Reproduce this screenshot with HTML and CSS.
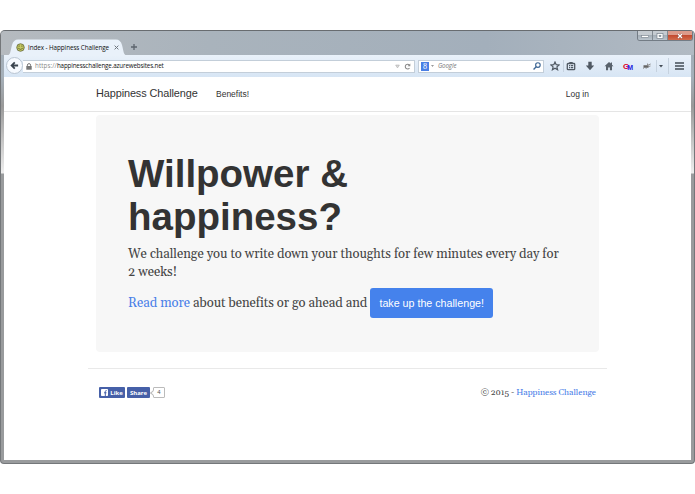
FILE: index.html
```
<!DOCTYPE html>
<html lang="en">

<head>
    <meta charset="UTF-8">
    <title>Index - Happiness Challenge</title>
    <link rel="stylesheet" href="styles.css">
</head>

<body>
    <div class="window">
        <div class="titlebar">
            <div class="tab">
                <svg class="tab-shape" viewBox="0 0 124 17" preserveAspectRatio="none">
                    <path d="M0 17 C6 17 5 13 7 6 Q8.500 .5 13 .5 H111 Q115.500 .5 117 6 C119 13 118 17 124 17Z" fill="#e9f1fa"/>
                </svg>
                <svg class="favicon" viewBox="0 0 10 10">
                    <circle cx="5" cy="5" r="4.200" fill="#c5c962" stroke="#56592e" stroke-width=".8"/>
                    <path d="M3.400 2.700v1.500M6.600 2.700v1.500M2.300 5.300q2.700 3.600 5.400 0" fill="none" stroke="#56592e" stroke-width=".9"/>
                </svg>
                <span class="tab-title">Index - Happiness Challenge</span>
                <svg class="tab-close" viewBox="0 0 5 5"><path d="M.6 .6l3.800 3.800M4.400 .6L.6 4.400" stroke="#6d757e" stroke-width="1"/></svg>
            </div>
            <svg class="new-tab" viewBox="0 0 6 6"><path d="M3 0v6M0 3h6" stroke="#5c646d" stroke-width="1.300"/></svg>
            <div class="controls">
                <span class="ctrl"><svg viewBox="0 0 10 6"><rect x="1.500" y="2.500" width="7" height="1.800" fill="#fff" stroke="#7b848e" stroke-width=".6"/></svg></span>
                <span class="ctrl"><svg viewBox="0 0 10 6"><rect x="2" y=".6" width="6" height="4.800" fill="#fff" stroke="#7b848e" stroke-width=".7"/><rect x="4" y="2.200" width="2" height="1.500" fill="#8d99a5" stroke="#7b848e" stroke-width=".5"/></svg></span>
                <span class="ctrl close"><svg viewBox="0 0 10 6"><path d="M3 1l4 4M7 1L3 5" stroke="#8d4d43" stroke-width="2.300"/><path d="M3 1l4 4M7 1L3 5" stroke="#fff" stroke-width="1.300"/></svg></span>
            </div>
        </div>

        <div class="toolbar">
            <span class="back"><svg viewBox="0 0 10 10"><path d="M9 5H2M5.300 1.500L1.800 5l3.500 3.500" fill="none" stroke="#39444f" stroke-width="2"/></svg></span>
            <div class="address">
                <svg class="lock" viewBox="0 0 6 7"><path d="M1.400 3.500V2.200a1.600 1.600 0 0 1 3.200 0v1.300" fill="none" stroke="#777" stroke-width="1"/><rect x=".3" y="3" width="5.400" height="3.700" fill="#777"/></svg>
                <span class="url"><i>https://</i>happinesschallenge.azurewebsites.net</span>
                <svg class="drop" viewBox="0 0 6 5"><path d="M.8 .8h4.400L3 4.200z" fill="#ddd" stroke="#aaa" stroke-width=".7"/></svg>
                <svg class="reload" viewBox="0 0 7 7"><path d="M5.500 5.200A2.400 2.400 0 1 1 5.400 1.900" fill="none" stroke="#8b8b8b" stroke-width="1.100"/><path d="M6.300 .4v2.900H3.500z" fill="#8b8b8b"/></svg>
            </div>
            <div class="search">
                <span class="engine">8</span>
                <svg class="caret" viewBox="0 0 4 2"><path d="M0 0h4L2 2z" fill="#777"/></svg>
                <span class="hint">Google</span>
                <svg class="glass" viewBox="0 0 7 7"><circle cx="4.300" cy="2.700" r="2" fill="none" stroke="#3e6795" stroke-width="1"/><path d="M2.800 4.200L.5 6.500" stroke="#3e6795" stroke-width="1.200"/></svg>
            </div>
            <div class="tools">
                <svg viewBox="0 0 10 10"><path d="M5 1l1.200 2.700 2.900.3-2.200 1.900.7 2.900L5 7.300 2.400 8.800l.7-2.900L.9 4l2.900-.3z" fill="none" stroke="#505963" stroke-width="1.200"/></svg>
                <span class="sep"></span>
                <svg class="clip" viewBox="0 0 10 10"><rect x="1.300" y="2.500" width="7.400" height="6.200" rx=".8" fill="none" stroke="#505963" stroke-width="1.300"/><path d="M3.300 1.500h3.400M3 4.600h1M4.700 4.600h2.500M3 6.600h1M4.700 6.600h2.500" stroke="#505963" stroke-width="1.100"/></svg>
                <svg class="down" viewBox="0 0 10 10"><path d="M3.300 .8h3.400v3.700h2.500L5 9.200 .8 4.500h2.500z" fill="#505963"/></svg>
                <svg class="home" viewBox="0 0 10 10"><path d="M5 1L.5 5.200h1.500v4h2.100V6.500h1.800v2.700H8v-4h1.500L8 3.700V1.500H6.800v1.100z" fill="#59626c"/></svg>
                <span class="gm"><b>G</b><b>M</b></span>
                <svg class="bug" viewBox="0 0 10 10"><path d="M1.500 4.200h5v2.600h-5z" fill="#666"/><path d="M5 4.500l3.700-1.500M6 5.700L8.500 5M1 7.500l1.500-1M4 7.800l.6-1.200M5.500 4V2.500" stroke="#888" stroke-width=".9"/></svg>
                <span class="sep bug-sep"></span>
                <svg class="more" viewBox="0 0 4 3"><path d="M0 0h4L2 2.600z" fill="#434c56"/></svg>
                <span class="sep menu-sep"></span>
                <svg class="menu" viewBox="0 0 9 8"><path d="M0 1h9M0 4h9M0 7h9" stroke="#434c56" stroke-width="1.600"/></svg>
            </div>
        </div>

        <div class="page">
            <div class="navbar">
                <a class="brand">Happiness Challenge</a>
                <a class="nav-link">Benefits!</a>
                <a class="login">Log in</a>
            </div>
            <div class="jumbotron">
                <h1>Willpower &amp; happiness?</h1>
                <p class="lead">We challenge you to write down your thoughts for few minutes every day for<br>2 weeks!</p>
                <p class="action"><span><a>Read more</a> about benefits or go ahead and</span><a class="btn">take up the challenge!</a></p>
            </div>
            <div class="footer">
                <div class="social">
                    <span class="fb like"><svg viewBox="0 0 7 7"><rect width="7" height="7" rx=".8" fill="#fff"/><path d="M4.300 7V2.400q0-.9 1.300-.8M3 3.800h2.500" fill="none" stroke="#4660a8" stroke-width="1"/></svg>Like</span>
                    <span class="fb share">Share</span>
                    <span class="count">4</span>
                </div>
                <p class="copy">© 2015 - <a>Happiness Challenge</a></p>
            </div>
        </div>
    </div>
</body>

</html>
```
FILE: styles.css
```
* {
    box-sizing: border-box;
}

body {
    margin: 0;
    padding-top: 30px;
    height: 494px;
    background: #fff;
    overflow: hidden;
    font-family: "Liberation Sans", Arial, sans-serif;
}

svg {
    display: block;
    flex: none;
}

.window {
    height: 434px;
    padding: 0 3px 3px;
    border: 1px solid #74777a;
    border-top-color: #686c70;
    border-radius: 5px 5px 4px 4px;
    background: linear-gradient(#9faab4 0, #a5b0ba 45px, #999 75px, #eee 142px, #999b9d 143px, #999b9d 100%);
    overflow: hidden;
}

/* ---- title bar ---- */
.titlebar {
    display: flex;
    height: 24px;
    margin: 0 -3px;
    padding: 8px 1px 0 5px;
    background: linear-gradient(90deg, #b5babf, #a9b3bc 30%, #a3afbb 70%, #b1bac3);
}

.tab {
    position: relative;
    display: flex;
    align-items: center;
    width: 122px;
    height: 17px;
    padding-left: 10px;
}

.tab-shape {
    position: absolute;
    left: -1px;
    top: 0;
    width: 124px;
    height: 17px;
}

.favicon {
    position: relative;
    width: 9px;
    height: 9px;
}

.tab-title {
    position: relative;
    width: 81px;
    margin: 0 5px 0 3px;
    font: 6.3px "Open Sans", sans-serif;
    letter-spacing: -.07px;
    color: #111;
    white-space: nowrap;
}

.tab-close {
    position: relative;
    width: 5px;
    height: 5px;
}

.new-tab {
    width: 6px;
    height: 6px;
    margin: 5px 0 0 3px;
}

.controls {
    display: flex;
    height: 10px;
    margin: -8px 0 0 auto;
    border: 1px solid #737c85;
    border-top: 0;
    border-radius: 0 0 3px 3px;
    overflow: hidden;
}

.ctrl {
    display: flex;
    align-items: center;
    justify-content: center;
    width: 15px;
    border-right: 1px solid #818991;
    background: linear-gradient(#c5cbd1 45%, #a5afb8 50%, #bac4cd);
}

.ctrl svg {
    width: 10px;
    height: 6px;
}

.ctrl.close {
    width: 24px;
    border: 0;
    background: linear-gradient(#dc9b8b 45%, #c34b30 50%, #d16b4c);
}

/* ---- toolbar ---- */
.toolbar {
    display: flex;
    align-items: center;
    height: 22px;
    background: linear-gradient(#e9f1fa, #d7e5f4);
    font-family: "Open Sans", sans-serif;
}

.back {
    display: flex;
    align-items: center;
    justify-content: center;
    flex: none;
    width: 17px;
    height: 17px;
    margin: -1px 0 0 2px;
    border: 1px solid #b9c5d2;
    border-radius: 50%;
    background: #f6faff;
}

.back svg {
    width: 9px;
    height: 9px;
}

.address,
.search {
    display: flex;
    align-items: center;
    height: 13px;
    border: 1px solid #c3ced9;
    background: #fff;
}

.address {
    width: 392px;
    padding: 0 3px;
    border-left: 0;
}

.lock {
    width: 6px;
    height: 7px;
}

.url {
    margin-left: 3px;
    font-size: 6.2px;
    line-height: 10px;
    letter-spacing: -.12px;
    color: #111;
    white-space: nowrap;
}

.url i {
    font-style: normal;
    letter-spacing: .1px;
    color: #8a8a8a;
}

.drop {
    width: 5px;
    height: 5px;
    margin-left: auto;
}

.reload {
    width: 7px;
    height: 7px;
    margin-left: 4px;
}

.search {
    width: 126px;
    margin-left: 3px;
    padding: 0 2px;
}

.engine {
    width: 8px;
    height: 9px;
    background: #4a7fe5;
    color: #fff;
    font: 8px/9px "Liberation Serif", serif;
    text-align: center;
}

.caret {
    width: 3px;
    height: 2px;
    margin-left: 2px;
}

.hint {
    margin-left: 4px;
    font-size: 6.2px;
    font-style: italic;
    line-height: 10px;
    letter-spacing: -.1px;
    color: #777;
}

.glass {
    width: 8px;
    height: 8px;
    margin-left: auto;
}

.tools {
    display: flex;
    align-items: center;
    height: 14px;
    margin-left: 6px;
}

.tools svg {
    width: 10px;
    height: 10px;
}

.sep {
    width: 1px;
    height: 12px;
    margin-left: 3px;
    background: #c6d2df;
}

.tools .clip {
    margin-left: 2px;
}

.tools .down {
    margin-left: 9px;
}

.tools .home {
    margin-left: 9px;
}

.gm {
    margin-left: 9px;
    width: 10px;
    font: 8px/9px "Liberation Sans", sans-serif;
    letter-spacing: -2px;
    color: #e00020;
    white-space: nowrap;
}

.gm b + b {
    position: relative;
    top: 1px;
    font-size: 7px;
    color: #2323df;
}

.tools .bug {
    margin-left: 9px;
}

.tools .bug-sep {
    margin-left: 4px;
}

.tools .more {
    width: 4px;
    height: 3px;
    margin-left: 2px;
}

.tools .menu-sep {
    height: 16px;
    margin-left: 5px;
}

.tools .menu {
    width: 9px;
    height: 8px;
    margin-left: 6px;
}

/* ---- page ---- */
.page {
    height: 383px;
    background: #fff;
    overflow: hidden;
}

.navbar {
    display: flex;
    align-items: center;
    height: 35px;
    padding: 0 102px 0 92px;
    border-bottom: 1px solid #e5e5e5;
    color: #333;
}

.brand {
    width: 120px;
    padding-bottom: 2px;
    font-size: 10.9px;
    letter-spacing: -.1px;
}

.nav-link,
.login {
    font-size: 8.5px;
}

.login {
    margin-left: auto;
}

.jumbotron {
    width: 503px;
    height: 237px;
    margin: 3px 0 0 92px;
    padding: 37px 32px 0;
    border-radius: 4px;
    background: #f7f7f7;
    color: #444;
}

h1 {
    width: 300px;
    margin: 0;
    font-size: 38.500px;
    line-height: 43px;
    color: #333;
}

.lead,
.action {
    margin: 7px 0 0;
    font: 13px/18px Georgia, Gelasio, "Liberation Serif", serif;
    letter-spacing: -.07px;
    white-space: nowrap;
}

.action {
    display: flex;
    align-items: center;
    gap: 3px;
}

.action a,
.copy a {
    color: #4a80e8;
}

.action .btn {
    width: 123px;
    height: 30px;
    border-radius: 3px;
    background: #4582ec;
    color: #fff;
    font: 10.7px/30px "Liberation Sans", Arial, sans-serif;
    letter-spacing: 0;
    text-align: center;
}

.footer {
    display: flex;
    justify-content: space-between;
    width: 519px;
    margin: 16px 0 0 84px;
    padding: 18px 11px 0;
    border-top: 1px solid #e9e9e9;
}

.social {
    display: flex;
    gap: 2px;
}

.fb {
    display: flex;
    align-items: center;
    justify-content: center;
    height: 11px;
    border-radius: 1px;
    background: #4660a8;
    color: #fff;
    font: bold 6px "Open Sans", sans-serif;
}

.like {
    width: 26px;
    gap: 2px;
}

.like svg {
    width: 7px;
    height: 7px;
}

.share {
    width: 23px;
}

.count {
    position: relative;
    width: 12px;
    height: 11px;
    margin-left: 1px;
    border: 1px solid #bbb;
    border-radius: 1px;
    color: #555;
    font-size: 6px;
    line-height: 9px;
    text-align: center;
}

/* little arrow of the bubble */
.count::before {
    content: "";
    position: absolute;
    left: -3px;
    top: 3px;
    width: 3px;
    height: 3px;
    border-left: 1px solid #bbb;
    border-bottom: 1px solid #bbb;
    background: #fff;
    transform: rotate(45deg);
}

.copy {
    margin: 0;
    font: 8.7px/11px Georgia, Gelasio, "Liberation Serif", serif;
    letter-spacing: -.06px;
    color: #444;
    white-space: nowrap;
}
```
